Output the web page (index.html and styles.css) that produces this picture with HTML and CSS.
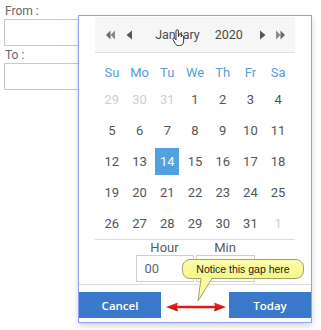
FILE: index.html
```html
<!DOCTYPE html>
<html>
<head>
<meta charset="utf-8">
<link rel="stylesheet" href="styles.css">
</head>
<body>
<div class="page">
  <div class="form">
    <label class="lbl">From :</label>
    <input class="field" type="text">
    <label class="lbl lbl-to">To :</label>
    <input class="field" type="text">
  </div>

  <div class="picker">
    <div class="cal">
      <div class="head">
        <span class="nav nav-dbl"><svg width="9" height="10" viewBox="0 0 9 10"><polygon points="4.5,0.5 4.5,9.5 0,5" fill="#6a6a6a"/><polygon points="9,0.5 9,9.5 4.5,5" fill="#8a8a8a"/></svg></span>
        <span class="nav nav-one"><svg width="7" height="10" viewBox="0 0 7 10"><polygon points="6,0.5 6,9.5 0.5,5" fill="#555"/></svg></span>
        <span class="title"><span>January</span><span class="year">2020</span></span>
        <span class="nav nav-one nav-r"><svg width="7" height="10" viewBox="0 0 7 10"><polygon points="1,0.5 1,9.5 6.5,5" fill="#555"/></svg></span>
        <span class="nav nav-dbl"><svg width="9" height="10" viewBox="0 0 9 10"><polygon points="0,0.5 0,9.5 4.5,5" fill="#8a8a8a"/><polygon points="4.5,0.5 4.5,9.5 9,5" fill="#6a6a6a"/></svg></span>
      </div>

      <div class="dow">
        <span>Su</span><span>Mo</span><span>Tu</span><span>We</span><span>Th</span><span>Fr</span><span>Sa</span>
      </div>

      <div class="days">
        <span class="d muted">29</span><span class="d muted">30</span><span class="d muted">31</span><span class="d">1</span><span class="d">2</span><span class="d">3</span><span class="d">4</span>
        <span class="d">5</span><span class="d">6</span><span class="d">7</span><span class="d">8</span><span class="d">9</span><span class="d">10</span><span class="d">11</span>
        <span class="d">12</span><span class="d">13</span><span class="d sel">14</span><span class="d">15</span><span class="d">16</span><span class="d">17</span><span class="d">18</span>
        <span class="d">19</span><span class="d">20</span><span class="d">21</span><span class="d">22</span><span class="d">23</span><span class="d">24</span><span class="d">25</span>
        <span class="d">26</span><span class="d">27</span><span class="d">28</span><span class="d">29</span><span class="d">30</span><span class="d">31</span><span class="d muted">1</span>
      </div>

      <div class="time">
        <span class="tlabel">Hour</span><span class="tlabel">Min</span>
        <input class="tinput" type="text" value="00"><input class="tinput" type="text" value="00">
      </div>
    </div>

    <div class="foot">
      <button class="btn">Cancel</button>
      <button class="btn">Today</button>
    </div>
  </div>

  <svg class="cursor" width="14" height="18" viewBox="0 0 14 18"><path d="M4 2 a1.2 1.2 0 0 1 2.4 0 V7.5 h0.4 V6 a1.2 1.2 0 0 1 2.4 0 V7.6 a1.2 1.2 0 0 1 2.4 0.2 V12.5 c0 2.5 -1.5 4 -4 4 H6.2 c-1.5 0 -2.4 -0.9 -3.1 -2.1 L1 10.5 a1.1 1.1 0 0 1 1.9 -1.1 L4 11 Z" fill="#fff" stroke="#222" stroke-width="0.9"/></svg>

  <div class="note">Notice this gap here</div>
  <svg class="note-tail" width="24" height="26" viewBox="0 0 24 26"><polygon points="9,0 20,0 6,24" fill="#fcfc9a"/><polyline points="9,1.5 6,24 20,1.5" fill="none" stroke="#a3a36a" stroke-width="1"/></svg>

  <svg class="gap-arrow" width="60" height="10" viewBox="0 0 60 10">
    <defs><linearGradient id="rg" x1="0" y1="0" x2="0" y2="1"><stop offset="0" stop-color="#ff3030"/><stop offset="1" stop-color="#c00000"/></linearGradient></defs>
    <polygon points="0,5 12,0.5 11,3.8 49,3.8 48,0.5 60,5 48,9.5 49,6.2 11,6.2 12,9.5" fill="url(#rg)"/>
  </svg>
</div>
</body>
</html>
```

FILE: styles.css
```css
html, body {
  margin: 0;
  padding: 0;
  background: #fff;
}

body {
  font-family: Roboto, "Liberation Sans", sans-serif;
}

.page {
  position: relative;
  width: 321px;
  height: 330px;
  overflow: hidden;
  padding: 1px 0 0 4px;
  box-sizing: border-box;
}

.form {
  display: flex;
  flex-direction: column;
  align-items: flex-start;
}

.lbl {
  display: block;
  font-size: 12px;
  line-height: 16px;
  padding-top: 2px;
  color: #666;
  padding-left: 1px;
}

.lbl-to {
  padding-top: 1px;
}

.field {
  display: block;
  width: 200px;
  height: 27px;
  box-sizing: border-box;
  margin: 0;
  border: 1px solid #c9c9c9;
  background: #fff;
}

.picker {
  position: absolute;
  left: 78px;
  top: 15px;
  width: 234px;
  height: 308px;
  box-sizing: border-box;
  border: 1px solid #8ea2f0;
  background: #fff;
  box-shadow: 0 3px 6px rgba(0, 0, 0, 0.16);
  padding-top: 1px;
}

.cal {
  padding: 0 16px;
}

.head {
  display: flex;
  align-items: center;
  height: 36px;
  box-sizing: border-box;
  border-bottom: 1px solid #dedede;
  background: #f6f6f6;
  padding: 0 10px 0 11px;
  color: #4a4a4a;
  font-size: 12.5px;
}

.nav {
  display: flex;
  align-items: center;
}

.nav-dbl {
  width: 9px;
}

.nav-one {
  width: 7px;
  margin-left: 11px;
}

.nav-r {
  margin-left: 0;
  margin-right: 10px;
}

.title {
  flex: 1;
  text-align: center;
  padding-left: 6px;
}

.year {
  margin-left: 15px;
}

.dow {
  display: grid;
  grid-template-columns: repeat(7, 1fr);
  justify-items: center;
  align-items: center;
  height: 28px;
  margin-top: 5px;
  padding: 0 3px;
  color: #5b9bdb;
  font-size: 13px;
}

.days {
  display: grid;
  grid-template-columns: repeat(7, 1fr);
  grid-auto-rows: 27px;
  row-gap: 4px;
  justify-items: center;
  padding: 0 3px;
  font-size: 13px;
  color: #555;
}

.d {
  width: 24px;
  height: 27px;
  display: flex;
  align-items: center;
  justify-content: center;
}

.muted {
  color: #d0d0d0;
}

.sel {
  background: #529fe2;
  color: #fff;
}

.time {
  margin-top: 2px;
  border-top: 1px solid #dcdcdc;
  display: grid;
  grid-template-columns: 58px 59px;
  column-gap: 2px;
  justify-content: center;
}

.tlabel {
  text-align: center;
  font-size: 13px;
  line-height: 15px;
  height: 15px;
  color: #585868;
}

.tinput {
  width: 100%;
  height: 27px;
  box-sizing: border-box;
  margin: 0;
  border: 1px solid #cfcfcf;
  padding: 0 0 0 8px;
  font-family: Roboto, "Liberation Sans", sans-serif;
  font-size: 13px;
  color: #666;
  background: #fff;
}

.foot {
  margin-top: 2px;
  border-top: 1px solid #dcdcdc;
  padding-top: 7px;
  display: flex;
  justify-content: space-between;
}

.btn {
  width: 82px;
  height: 26px;
  margin: 0;
  border: none;
  background: #3a79c9;
  color: #fff;
  font-family: "Open Sans", "Liberation Sans", sans-serif;
  font-size: 11.5px;
  font-weight: 600;
  padding: 0;
}

.cursor {
  position: absolute;
  left: 172px;
  top: 29px;
}

.note {
  position: absolute;
  left: 182px;
  top: 259px;
  width: 122px;
  height: 20px;
  box-sizing: border-box;
  border: 1px solid #a3a36a;
  border-radius: 8px;
  background: linear-gradient(#fdfda6, #f6f68c);
  font-family: "Liberation Sans", Arial, sans-serif;
  font-size: 10.5px;
  line-height: 18px;
  color: #222;
  text-align: center;
}

.note-tail {
  position: absolute;
  left: 192px;
  top: 277px;
}

.gap-arrow {
  position: absolute;
  left: 166px;
  top: 302px;
}
```
